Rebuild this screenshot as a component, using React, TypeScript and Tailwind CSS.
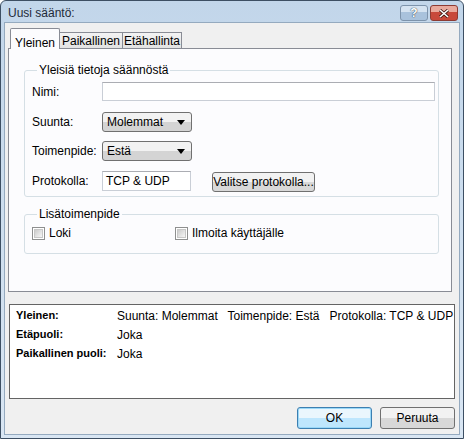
import React from "react";

const font = "font-['Liberation_Sans',Arial,sans-serif]";

function Combo({ value }: { value: string }) {
  return (
    <div className="flex h-[20px] w-[90px] items-center justify-between rounded-[3px] border border-[#707070] bg-gradient-to-b from-[#f2f2f2] from-50% to-[#d4d4d4] to-50% pl-[4px] pr-[6px] text-[12px] text-black">
      <span>{value}</span>
      <svg width="8" height="5" viewBox="0 0 8 5">
        <path d="M0 0 L8 0 L4 5 Z" fill="#000" />
      </svg>
    </div>
  );
}

function CheckBox({ label }: { label: string }) {
  return (
    <label className="flex items-center gap-[4px]">
      <span className="flex h-[13px] w-[13px] items-center justify-center border border-[#8e8f8f] bg-white">
        <span className="h-[9px] w-[9px] border border-[#c7c7c7] bg-gradient-to-br from-[#cbcbcb] to-[#f6f6f6]" />
      </span>
      <span className="text-[12px]">{label}</span>
    </label>
  );
}

function FieldRow({ label, children, className }: { label: string; children: React.ReactNode; className?: string }) {
  return (
    <div className={`flex items-center ${className ?? ""}`}>
      <span className="w-[70px] shrink-0 text-[12px]">{label}</span>
      {children}
    </div>
  );
}

export default function App() {
  return (
    <div className={`h-[439px] w-[464px] ${font} text-black`}>
      <div className="flex h-[439px] w-[464px] flex-col rounded-t-[6px] border border-[#3d4f63] bg-gradient-to-b from-[#c2d6ea] to-[#d9e6f3]">
        {/* title bar */}
        <div className="flex h-[21px] shrink-0 items-center justify-between pl-[7px] pr-[5px]">
          <span className="pt-[2px] text-[12px] text-[#1e2a38]">Uusi sääntö:</span>
          <div className="flex items-start gap-[2px] self-start pt-[4px]">
            <div className="flex h-[16px] w-[28px] items-center justify-center rounded-[3px] border border-[#7d93ab] bg-gradient-to-b from-[#d5e3f1] from-45% to-[#a9c2dc] to-45% text-[12px] font-bold text-white [text-shadow:0_0_1px_#2c3e50,0_0_1px_#2c3e50]">
              ?
            </div>
            <div className="flex h-[16px] w-[28px] items-center justify-center rounded-[3px] border border-[#8d3b33] bg-gradient-to-b from-[#e9a99c] from-45% to-[#c8493b] to-45%">
              <svg width="10" height="9" viewBox="0 0 10 9">
                <path d="M1 1 L9 8 M9 1 L1 8" stroke="#3a1410" strokeWidth="3" />
                <path d="M1 1 L9 8 M9 1 L1 8" stroke="#fff" strokeWidth="1.6" />
              </svg>
            </div>
          </div>
        </div>

        {/* body */}
        <div className="mx-[3px] mb-[3px] flex flex-1 flex-col border border-[#95aabf] bg-[#f0f0f0]">
          {/* tabs */}
          <div className="ml-[3px] mr-[7px] mt-[5px] flex items-end">
            <div className="relative z-10 -mb-px ml-[2px] flex h-[21px] w-[50px] items-start justify-center rounded-t-[2px] border border-b-0 border-[#898c95] bg-[#fcfcfe] pt-[5px] text-[12px]">
              Yleinen
            </div>
            <div className="flex h-[16px] w-[63px] items-center justify-center border border-b-0 border-l-0 border-[#898c95] bg-gradient-to-b from-[#f3f3f3] to-[#e2e2e2] text-[12px]">
              Paikallinen
            </div>
            <div className="flex h-[16px] w-[59px] items-center justify-center border border-b-0 border-l-0 border-[#898c95] bg-gradient-to-b from-[#f3f3f3] to-[#e2e2e2] text-[12px]">
              Etähallinta
            </div>
          </div>
          <div className="ml-[3px] mr-[7px] flex h-[244px] flex-col border border-[#898c95] bg-[#fcfcfe] pl-[15px] pr-[12px]">
            <fieldset className="mt-[14px] h-[134px] rounded-[3px] border border-[#d5dfe5] pl-[7px] pr-[3px]">
              <legend className="ml-[5px] px-[2px] text-[12px] leading-[14px]">Yleisiä tietoja säännöstä</legend>
              <FieldRow label="Nimi:" className="mt-[5px]">
                <div className="h-[19px] flex-1 border border-[#c9ced6] border-t-[#abadb3] bg-white" />
              </FieldRow>
              <FieldRow label="Suunta:" className="mt-[11px]">
                <Combo value="Molemmat" />
              </FieldRow>
              <FieldRow label="Toimenpide:" className="mt-[9px]">
                <Combo value="Estä" />
              </FieldRow>
              <FieldRow label="Protokolla:" className="mt-[8px]">
                <div className="flex h-[20px] w-[89px] items-center border border-[#c9ced6] border-t-[#abadb3] bg-white pl-[3px] text-[12px]">
                  TCP &amp; UDP
                </div>
                <div className="ml-[21px] mt-[3px] flex h-[20px] w-[103px] items-center justify-center rounded-[3px] border border-[#707070] bg-gradient-to-b from-[#f2f2f2] from-50% to-[#d8d8d8] to-50% text-[12px]">
                  Valitse protokolla...
                </div>
              </FieldRow>
            </fieldset>
            <fieldset className="mt-[10px] h-[47px] rounded-[3px] border border-[#d5dfe5] pl-[7px]">
              <legend className="ml-[5px] px-[2px] text-[12px] leading-[14px]">Lisätoimenpide</legend>
              <div className="mt-[3px] flex items-center">
                <div className="w-[143px]">
                  <CheckBox label="Loki" />
                </div>
                <CheckBox label="Ilmoita käyttäjälle" />
              </div>
            </fieldset>
          </div>

          {/* summary */}
          <div className="ml-[4px] mr-[4px] mt-[12px] h-[95px] border border-[#646464] bg-white pl-[6px] pt-[1px] text-[12px]">
            <div className="flex h-[19px] items-center">
              <span className="w-[101px] text-[11px] font-bold">Yleinen:</span>
              <span>Suunta: Molemmat&nbsp;&nbsp; Toimenpide: Estä&nbsp;&nbsp; Protokolla: TCP &amp; UDP</span>
            </div>
            <div className="flex h-[19px] items-center">
              <span className="w-[101px] text-[11px] font-bold">Etäpuoli:</span>
              <span>Joka</span>
            </div>
            <div className="flex h-[19px] items-center">
              <span className="w-[101px] text-[11px] font-bold">Paikallinen puoli:</span>
              <span>Joka</span>
            </div>
          </div>

          {/* buttons */}
          <div className="mr-[4px] mt-[8px] flex justify-end gap-[8px]">
            <button className="flex h-[22px] w-[75px] items-center justify-center rounded-[3px] border border-[#3c7fb1] bg-gradient-to-b from-[#eaf6fd] from-50% to-[#bee6fd] to-50% text-[12px] shadow-[inset_0_0_0_1px_#9ad8f8]">
              OK
            </button>
            <button className="flex h-[22px] w-[75px] items-center justify-center rounded-[3px] border border-[#707070] bg-gradient-to-b from-[#f2f2f2] from-50% to-[#d8d8d8] to-50% text-[12px]">
              Peruuta
            </button>
          </div>
        </div>
      </div>
    </div>
  );
}
